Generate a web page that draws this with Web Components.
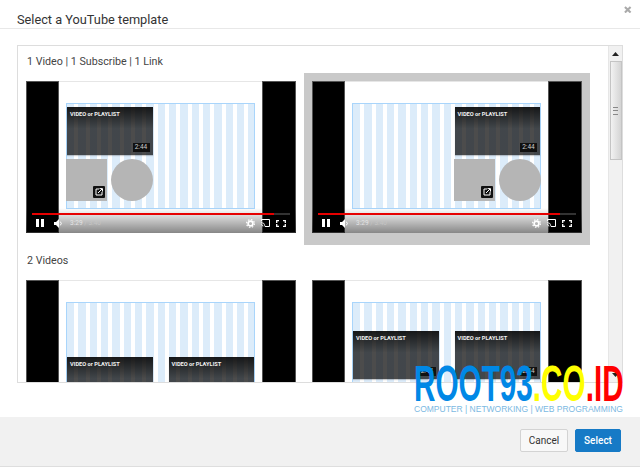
<!DOCTYPE html>
<html>
<head>
<meta charset="utf-8">
<title>Select a YouTube template</title>
<style>
  html, body { margin: 0; height: 467px; overflow: hidden; background: #fff; }
  body { font-family: Roboto, "Liberation Sans", sans-serif; color: #333; }
</style>
</head>
<body>

<yt-dialog heading="Select a YouTube template">
  <template-group label="1 Video | 1 Subscribe | 1 Link">
    <template-thumb layout="left"></template-thumb>
    <template-thumb layout="right" selected></template-thumb>
  </template-group>
  <template-group label="2 Videos">
    <template-thumb layout="two-low"></template-thumb>
    <template-thumb layout="two-mid"></template-thumb>
  </template-group>
  <root-badge slot="overlay"></root-badge>
</yt-dialog>

<script>
// dialogo con cabecera, panel con scroll y pie
class YtDialog extends HTMLElement {
    constructor() {
        super();
        this.attachShadow({ mode: 'open' });
    }

    connectedCallback() {
        this.shadowRoot.innerHTML = `
            <style>
                :host { display: flex; flex-direction: column; position: relative; height: 467px; overflow: hidden; }
                header { height: 28px; flex: none; box-sizing: content-box; border-bottom: 1px solid #e8e8e8; padding-left: 17px; display: flex; align-items: center; justify-content: space-between; }
                h2 { margin: 10px 0 0; font-size: 12.75px; font-weight: 400; color: #333; }
                .close { width: 7.5px; height: 7.5px; margin: -9px 8.5px 0 0; }
                main { flex: 1; min-height: 0; padding: 16px 17px 34px; }
                .panel { height: 100%; box-sizing: border-box; border: 1px solid #ddd; display: flex; }
                .scroller { flex: 1; min-width: 0; overflow: hidden; }
                .bar { width: 13px; flex: none; background: #f1f1f1; border-left: 1px solid #e6e6e6; display: flex; flex-direction: column; align-items: center; }
                .arrow { height: 15px; flex: none; display: flex; align-items: center; justify-content: center; }
                .grip { width: 12px; height: 99px; flex: none; box-sizing: border-box; border: 1px solid #c4c4c4; background: linear-gradient(90deg, #f2f2f2, #d4d4d4); display: flex; align-items: center; justify-content: center; }
                .grip i { width: 5px; height: 6px; border-top: 1px solid #888; border-bottom: 1px solid #888; position: relative; }
                .grip i::after { content: ''; position: absolute; left: 0; right: 0; top: 2px; height: 1px; background: #888; }
                .space { flex: 1; }
                footer { height: 49px; flex: none; background: #f1f1f1; border-bottom: 1px solid #dedede; display: flex; align-items: center; justify-content: flex-end; gap: 7px; padding-right: 19px; }
                button { height: 23px; box-sizing: border-box; border-radius: 2px; font: 500 10px Roboto, "Liberation Sans", sans-serif; padding: 0; margin-top: -2px; }
                .cancel { width: 48px; background: #f8f8f8; border: 1px solid #d3d3d3; color: #333; font-weight: 400; }
                .select { width: 46px; background: #167ac6; border: 1px solid #167ac6; color: #fff; }
            </style>
            <header>
                <h2>${this.getAttribute('heading')}</h2>
                <svg class="close" viewBox="0 0 8 8"><path d="M1 1l6 6M7 1L1 7" stroke="#aaa" stroke-width="2.2" fill="none"/></svg>
            </header>
            <main>
                <div class="panel">
                    <div class="scroller"><slot></slot></div>
                    <div class="bar">
                        <div class="arrow"><svg width="7" height="4" viewBox="0 0 7 4"><path d="M3.5 0L7 4H0z" fill="#222"/></svg></div>
                        <div class="grip"><i></i></div>
                        <div class="space"></div>
                        <div class="arrow"><svg width="7" height="4" viewBox="0 0 7 4"><path d="M3.5 4L7 0H0z" fill="#222"/></svg></div>
                    </div>
                </div>
            </main>
            <footer>
                <button class="cancel" type="button">Cancel</button>
                <button class="select" type="button">Select</button>
            </footer>
            <slot name="overlay"></slot>
        `;
    }
}

// titulo y fila de plantillas
class TemplateGroup extends HTMLElement {
    constructor() {
        super();
        this.attachShadow({ mode: 'open' });
    }

    connectedCallback() {
        this.shadowRoot.innerHTML = `
            <style>
                :host { display: block; }
                h3 { margin: 0; padding: 10px 0 5px 9px; font-size: 10.7px; line-height: 12px; font-weight: 400; color: #444; }
                .row { display: flex; align-items: flex-start; }
            </style>
            <h3>${this.getAttribute('label')}</h3>
            <div class="row"><slot></slot></div>
        `;
    }
}

const LAYOUTS = {
    left: `<mini-video></mini-video><div class="pair"><div class="square">${linkIcon()}</div><div class="circle"></div></div>`,
    right: `<mini-video></mini-video><div class="pair"><div class="square">${linkIcon()}</div><div class="circle"></div></div>`,
    'two-low': `<div class="two"><mini-video></mini-video><mini-video></mini-video></div>`,
    'two-mid': `<div class="two"><mini-video></mini-video><mini-video></mini-video></div>`
};

function linkIcon() {
    return `<svg width="12" height="12" viewBox="0 0 12 12"><rect width="12" height="12" rx="1" fill="#111"/><path d="M6 3H3v6h6V6" stroke="#fff" stroke-width="1" fill="none"/><path d="M5 7l4-4M6.5 2.6h3v3" stroke="#fff" stroke-width="1" fill="none"/></svg>`;
}

// miniatura de plantilla con el reproductor
class TemplateThumb extends HTMLElement {
    constructor() {
        super();
        this.attachShadow({ mode: 'open' });
    }

    connectedCallback() {
        const layout = this.getAttribute('layout');
        this.shadowRoot.innerHTML = `
            <style>
                :host { display: block; flex: none; width: 270px; padding: 8px 8px 12px; background: transparent; }
                :host([selected]) { background: #c9c9c9; }
                .player { position: relative; height: 152px; display: grid; grid-template-columns: 33px 1fr 34px; background: #fff; overflow: hidden; }
                .side { background: #000; box-shadow: inset 0 0 0 1px #555; }
                .stage { border-top: 1px solid #e6e6e6; padding: 21px 7px 0; min-width: 0; background: #fff; }
                .safe { height: 106px; box-sizing: border-box; border: 1px solid #a9d5fb; display: flex; flex-direction: column;
                    background: repeating-linear-gradient(90deg, #dcecfa 0 7.33px, #fff 7.33px 11.33px); }
                .left, .right { padding-top: 3px; }
                .right { align-items: flex-end; }
                .two-low, .two-mid { flex-direction: row; }
                .two-low { padding-top: 54px; }
                .two-mid { padding-top: 28px; }
                .two { display: flex; justify-content: space-between; width: 100%; }
                .pair { display: flex; gap: 4px; margin: 4px 0 0 -1px; }
                .right .pair { margin: 4px -1px 0 0; }
                .square { width: 41px; height: 42px; background: #b5b5b5; display: flex; align-items: flex-end; justify-content: flex-end; padding: 0 2px 3px 0; box-sizing: border-box; }
                .circle { width: 42px; height: 42px; border-radius: 50%; background: #b5b5b5; }
            </style>
            <div class="player">
                <div class="side"></div>
                <div class="stage"><div class="safe ${layout}">${LAYOUTS[layout]}</div></div>
                <div class="side"></div>
                <player-controls></player-controls>
            </div>
        `;
    }
}

// recuadro oscuro de video
class MiniVideo extends HTMLElement {
    constructor() {
        super();
        this.attachShadow({ mode: 'open' });
        this.shadowRoot.innerHTML = `
            <style>
                :host { display: block; position: relative; width: 85.5px; height: 48px; flex: none; box-sizing: border-box; padding: 3px 3px;
                    background: linear-gradient(rgba(0,0,0,.9), rgba(0,0,0,.7) 45%); box-shadow: 0 1px 1px rgba(0,0,0,.2); }
                .t { font: 700 5.7px/8px Roboto, "Liberation Sans", sans-serif; color: #f2f2f2; white-space: nowrap; }
                .d { position: absolute; right: 3px; bottom: 3px; width: 17px; height: 9px; background: #111; color: #ccc; font: 400 6.5px/9px Roboto, "Liberation Sans", sans-serif; text-align: center; }
            </style>
            <div class="t">VIDEO or PLAYLIST</div>
            <div class="d">2:44</div>
        `;
    }
}

// barra de controles sobre la miniatura
class PlayerControls extends HTMLElement {
    constructor() {
        super();
        this.attachShadow({ mode: 'open' });
        this.shadowRoot.innerHTML = `
            <style>
                :host { position: absolute; left: 0; right: 0; bottom: 0; height: 25px; box-sizing: border-box; padding: 5px 6px 0; display: block;
                    background: linear-gradient(rgba(0,0,0,0), rgba(0,0,0,.47)); }
                .track { height: 2px; background: #333; }
                .track i { display: block; width: 242px; height: 100%; background: #e60000; }
                .row { display: flex; align-items: center; height: 10px; margin-top: 3px; padding-left: 4px; }
                svg { display: block; flex: none; }
                .time { margin-left: 7px; font: 400 6.5px/10px Roboto, "Liberation Sans", sans-serif; color: #e4e4e4; white-space: nowrap; }
                .time span { color: #c4c4c4; }
                .end { margin-left: auto; display: flex; gap: 6px; align-items: center; padding-right: 4px; }
            </style>
            <div class="track"><i></i></div>
            <div class="row">
                <svg width="8" height="8" viewBox="0 0 8 8"><path d="M0 0h3v8H0zM5 0h3v8H5z" fill="#fff"/></svg>
                <svg style="margin-left:10px" width="9" height="9" viewBox="0 0 9 9"><path d="M0 3h2l3-3v9L2 6H0z" fill="#fff"/><path d="M6.3 2.6a2.6 2.6 0 0 1 0 3.8" stroke="#fff" fill="none"/></svg>
                <div class="time">3:29 <span>/ 3:40</span></div>
                <div class="end">
                    <svg width="9" height="9" viewBox="0 0 9 9"><circle cx="4.5" cy="4.5" r="2.4" stroke="#fff" stroke-width="1.7" fill="none"/><circle cx="4.5" cy="4.5" r="3.9" stroke="#fff" stroke-width="1.2" stroke-dasharray="1.5 1.56" fill="none"/></svg>
                    <svg width="9" height="8" viewBox="0 0 9 8"><path d="M.5 2V.5h8v7H4" stroke="#fff" fill="none"/><path d="M0 3.5a4 4 0 0 1 4 4M0 5.5a2 2 0 0 1 2 2" stroke="#fff" stroke-width=".8" fill="none"/></svg>
                    <svg width="10" height="7" viewBox="0 0 10 7"><path d="M.7 3V.7H3M7 .7h2.3V3M9.3 4v2.3H7M3 6.3H.7V4" stroke="#fff" stroke-width="1.3" fill="none"/></svg>
                </div>
            </div>
        `;
    }
}

// marca de agua sobre la captura
class RootBadge extends HTMLElement {
    constructor() {
        super();
        this.attachShadow({ mode: 'open' });
        this.shadowRoot.innerHTML = `
            <style>
                :host { position: absolute; left: 414px; top: 360px; width: 226px; height: 56px; display: block; font-family: "Liberation Sans", Arial, sans-serif; }
                .logo { font-size: 50px; line-height: 44px; height: 42px; margin-top: 2px; font-weight: 700; white-space: nowrap; transform: scaleX(.594); transform-origin: 0 0; }
                .b { color: #0088e6; } .y { color: #ffff00; } .r { color: #ff0000; }
                .sub { font-size: 8.5px; line-height: 10px; font-weight: 400; color: #7cb9e2; white-space: nowrap; }
            </style>
            <div class="logo"><span class="b">ROOT93</span><span class="y">.CO</span><span class="r">.ID</span></div>
            <div class="sub">COMPUTER | NETWORKING | WEB PROGRAMMING</div>
        `;
    }
}

customElements.define('yt-dialog', YtDialog);
customElements.define('template-group', TemplateGroup);
customElements.define('template-thumb', TemplateThumb);
customElements.define('mini-video', MiniVideo);
customElements.define('player-controls', PlayerControls);
customElements.define('root-badge', RootBadge);
</script>
</body>
</html>
